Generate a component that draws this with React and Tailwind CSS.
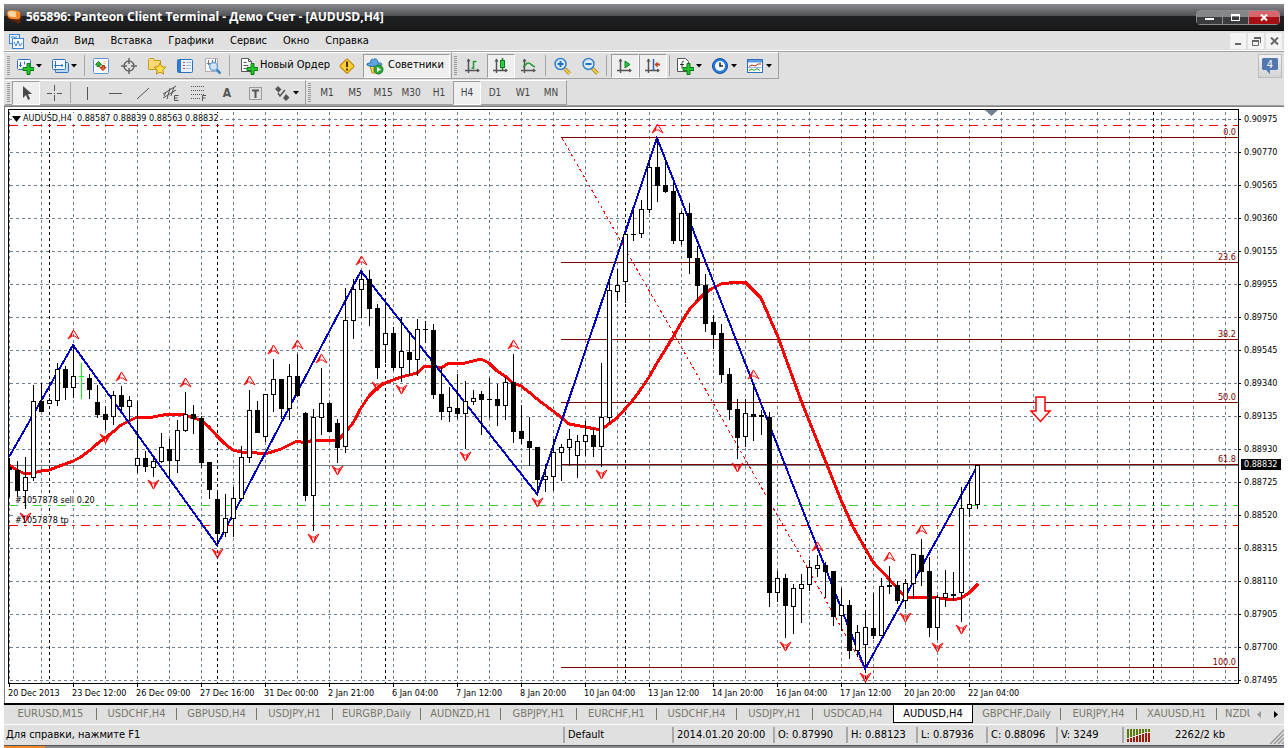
import { useState } from "react";

// y values per bar: [high, low, body top, body bottom, type] - w: bullish, b: bearish, g: doji
const BARS = [
  [458, 497, 467, 470, "b"], [461, 497, 470, 491, "b"], [457, 509, 477, 491, "w"], [385, 481, 401, 478, "w"],
  [383, 412, 401, 412, "b"], [398, 404, 400, 404, "w"], [363, 406, 369, 401, "w"], [366, 400, 369, 388, "b"],
  [345, 398, 376, 388, "w"], [363, 399, 376, 377, "g"], [374, 399, 378, 390, "b"], [385, 418, 402, 415, "b"],
  [406, 430, 414, 420, "b"], [391, 425, 395, 417, "w"], [386, 411, 395, 407, "b"], [396, 421, 400, 407, "w"],
  [401, 473, 458, 466, "w"], [451, 472, 458, 467, "b"], [457, 477, 461, 468, "w"], [433, 463, 447, 462, "w"],
  [439, 477, 449, 461, "b"], [420, 473, 430, 461, "w"], [392, 432, 414, 431, "w"], [405, 434, 414, 419, "b"],
  [416, 468, 418, 463, "b"], [462, 499, 462, 490, "b"], [493, 545, 499, 534, "b"], [494, 537, 518, 533, "w"],
  [487, 537, 498, 519, "w"], [446, 499, 457, 499, "w"], [390, 463, 410, 458, "w"], [401, 433, 410, 433, "b"],
  [394, 442, 394, 437, "w"], [359, 412, 379, 395, "w"], [379, 419, 379, 409, "b"], [364, 420, 376, 409, "w"],
  [354, 397, 376, 396, "b"], [412, 501, 413, 496, "b"], [409, 531, 417, 496, "w"], [368, 435, 403, 418, "w"],
  [402, 432, 403, 432, "b"], [419, 463, 423, 448, "b"], [288, 453, 320, 447, "w"], [279, 339, 289, 321, "w"],
  [271, 318, 279, 290, "w"], [270, 326, 279, 309, "b"], [304, 379, 308, 368, "b"], [305, 363, 333, 345, "w"],
  [327, 371, 333, 368, "b"], [317, 382, 351, 368, "w"], [331, 376, 352, 360, "b"], [319, 376, 329, 360, "w"],
  [321, 343, 329, 330, "b"], [324, 399, 330, 395, "b"], [367, 420, 394, 412, "b"], [387, 422, 407, 412, "w"],
  [374, 419, 408, 414, "b"], [381, 449, 401, 414, "w"], [390, 405, 398, 402, "w"], [391, 435, 394, 400, "b"],
  [378, 418, 399, 400, "b"], [384, 426, 399, 406, "b"], [377, 420, 382, 406, "w"], [354, 443, 382, 432, "b"],
  [405, 444, 431, 439, "b"], [417, 466, 441, 448, "b"], [447, 493, 447, 480, "b"], [464, 492, 476, 480, "w"],
  [439, 491, 452, 477, "w"], [444, 481, 447, 453, "w"], [429, 466, 439, 448, "w"], [435, 478, 441, 456, "w"],
  [421, 456, 435, 442, "w"], [428, 457, 435, 447, "b"], [363, 467, 417, 447, "w"], [280, 423, 290, 418, "w"],
  [269, 301, 285, 292, "w"], [233, 303, 234, 282, "w"], [210, 241, 234, 235, "b"], [200, 238, 209, 234, "w"],
  [158, 213, 167, 210, "w"], [138, 202, 167, 186, "b"], [159, 193, 185, 192, "b"], [183, 244, 191, 241, "b"],
  [211, 245, 213, 241, "w"], [203, 274, 213, 258, "b"], [246, 301, 258, 286, "b"], [274, 332, 285, 324, "b"],
  [315, 349, 322, 335, "b"], [324, 383, 333, 375, "b"], [368, 420, 374, 410, "b"], [399, 459, 409, 438, "b"],
  [399, 447, 413, 437, "w"], [384, 441, 414, 417, "b"], [410, 435, 415, 417, "b"], [412, 607, 417, 593, "b"],
  [571, 602, 578, 593, "w"], [574, 638, 578, 606, "b"], [584, 634, 588, 607, "w"], [574, 623, 584, 589, "w"],
  [560, 591, 567, 585, "w"], [555, 577, 565, 569, "w"], [562, 598, 565, 572, "b"], [571, 626, 571, 617, "b"],
  [588, 631, 605, 616, "w"], [600, 659, 605, 651, "b"], [625, 657, 632, 651, "w"], [613, 667, 627, 645, "w"],
  [593, 639, 628, 636, "b"], [578, 636, 586, 636, "w"], [566, 594, 585, 587, "b"], [581, 604, 585, 601, "b"],
  [579, 609, 583, 601, "w"], [554, 599, 554, 584, "w"], [539, 586, 555, 572, "b"], [557, 637, 571, 628, "b"],
  [595, 640, 597, 628, "w"], [570, 607, 593, 598, "w"], [572, 601, 594, 596, "b"], [487, 622, 508, 593, "w"],
  [478, 517, 504, 509, "w"], [465, 509, 465, 505, "w"],
];

const MA =
  "9,465 17,470 25,474 33,473 41,471 49,470 57,467 65,464 73,461 81,457 89,451 97,444 105,438 113,432 121,425 129,421 137,417 153,417 169,414 177,414 185,415 193,418 201,420 209,427 217,436 225,444 233,450 241,452 249,452 265,454 281,449 297,441 305,443 313,440 321,440 337,441 345,433 353,423 361,408 369,396 377,388 385,383 393,380 401,377 417,373 425,366 433,366 441,368 449,363 465,363 481,359 489,363 497,371 505,376 513,383 521,386 529,392 537,399 545,405 553,411 561,417 569,424 585,427 601,430 609,424 617,418 625,409 633,400 641,389 649,377 657,363 665,350 673,337 681,323 689,310 697,301 705,293 713,288 721,284 729,283 745,282 761,298 778,337 790,370 802,403 816,438 827,465 841,500 853,527 873,562 889,579 897,588 905,597 921,597 937,598 953,600 961,598 969,593 978,584";
const ZIGZAG = "9,457 73,345 217,545 361,271 537,494 657,138 865,669 978,465";

const UP = [[73, 334], [121, 376], [185, 382], [249, 380], [273, 349], [297, 344], [321, 358], [361, 260], [513, 344], [657, 128], [753, 374], [817, 546], [889, 556], [921, 529]];
const DOWN = [[25, 517], [105, 438], [153, 484], [217, 553], [313, 538], [337, 470], [377, 386], [401, 389], [465, 456], [537, 502], [601, 474], [737, 467], [785, 646], [865, 677], [905, 617], [937, 647], [961, 629]];

const FIBO = [[137, "0.0"], [262, "23.6"], [339, "38.2"], [402, "50.0"], [464, "61.8"], [667, "100.0"]];
const DAYS = [49, 217, 385, 625, 865, 1153];
const PRICES = ["0.90975", "0.90770", "0.90565", "0.90360", "0.90155", "0.89955", "0.89750", "0.89545", "0.89340", "0.89135", "0.88930", "0.88725", "0.88520", "0.88315", "0.88110", "0.87905", "0.87700", "0.87495"];
const TIMES = ["20 Dec 2013", "23 Dec 12:00", "26 Dec 09:00", "27 Dec 16:00", "31 Dec 00:00", "2 Jan 21:00", "6 Jan 04:00", "7 Jan 12:00", "8 Jan 20:00", "10 Jan 04:00", "13 Jan 12:00", "14 Jan 20:00", "16 Jan 04:00", "17 Jan 12:00", "20 Jan 20:00", "22 Jan 04:00"];

const TABS = [
  ["EURUSD,M15", "w-[92px]"], ["USDCHF,H4", "w-20"], ["GBPUSD,H4", "w-20"], ["USDJPY,H1", "w-[76px]"],
  ["EURGBP,Daily", "w-[88px]"], ["AUDNZD,H1", "w-20"], ["GBPJPY,H1", "w-[76px]"], ["EURCHF,H1", "w-20"],
  ["USDCHF,H4", "w-20"], ["USDJPY,H1", "w-[76px]"], ["USDCAD,H4", "w-20"], ["AUDUSD,H4", "w-20"],
  ["GBPCHF,Daily", "w-[88px]"], ["EURJPY,H4", "w-[76px]"], ["XAUUSD,H1", "w-20"],
];

const PERIODS = ["M1", "M5", "M15", "M30", "H1", "H4", "D1", "W1", "MN"];
const MENU = ["Файл", "Вид", "Вставка", "Графики", "Сервис", "Окно", "Справка"];

function Icon({ children, size = 18 }) {
  return (
    <svg width={size} height={size} viewBox="0 0 18 18" fill="none" className="shrink-0" aria-hidden="true">
      {children}
    </svg>
  );
}

const Plus = () => <path d="M11 6.5h3v4h4v3h-4v4h-3v-4H7v-3h4z" fill="#22c52e" stroke="#0a7a12" />;

const Axes = () => (
  <>
    <path d="M4.5 2v14M1 13.5h14" stroke="#555" strokeWidth="1.5" />
    <path d="M2.5 4.5l2-3 2 3zM13 11.5l3 2-3 2z" fill="#555" />
  </>
);

const NewChart = () => (
  <Icon>
    <rect x="1.5" y="2.5" width="13" height="10" rx="1" fill="#f4f9ff" stroke="#3572b5" />
    <path d="M4.5 5v5M3 8.5h3M8.5 4.5v3" stroke="#3572b5" />
    <Plus />
  </Icon>
);
const Profiles = () => (
  <Icon>
    <rect x="4.5" y="5.5" width="13" height="10" rx="1" fill="#bcd8f5" stroke="#3572b5" />
    <rect x="1.5" y="2.5" width="13" height="10" rx="1" fill="#eef6ff" stroke="#3572b5" />
    <path d="M4.5 4v7M3 8.5h9M11 7v3M4.5 15.5h9" stroke="#3572b5" />
  </Icon>
);
const MarketWatch = () => (
  <Icon>
    <rect x="1.5" y="1.5" width="15" height="15" rx="1" fill="#fdfdfd" stroke="#5b93d0" />
    <path d="M5 9.500V7.500H3.500L6.500 4.500l3 3H8v2z" fill="#3cb43c" stroke="#1c7d1c" />
    <path d="M10 8.500h2.500v2H14l-3 3-3-3h2z" fill="#f0622d" stroke="#a92d0b" />
    <path d="M11 4.500h4M11 6.500h3" stroke="#f2d0a8" />
  </Icon>
);
const Target = () => (
  <Icon>
    <circle cx="9" cy="9" r="5" stroke="#666" strokeWidth="1.5" />
    <path d="M9 1v6M9 11v6M1 9h6M11 9h6" stroke="#666" strokeWidth="1.5" />
  </Icon>
);
const Favorites = () => (
  <Icon>
    <path d="M.5 12.500V2.500l1-1h4l1 2h6v9z" fill="#f7d977" stroke="#c59a20" />
    <path d="M12 6l1.800 3.600 4 .6-3 2.800.8 4L12 15.200 8.400 17l.8-4-3-2.800 4-.6z" fill="#ffe04b" stroke="#c08a10" />
  </Icon>
);
const Navigator = () => (
  <Icon>
    <rect x="1.500" y="2.500" width="15" height="13" rx="1" fill="#eaf4ff" stroke="#2c6fbd" />
    <path d="M2 3h3v12H2z" fill="#2c7bd6" />
    <path d="M7 5.500h2M7 8.500h2M7 11.500h2" stroke="#d04020" />
    <path d="M10 5.500h5M10 8.500h5M10 11.500h5" stroke="#9fc0e4" />
  </Icon>
);
const Tester = () => (
  <Icon>
    <rect x="1.500" y="1.500" width="12" height="13" fill="#fafafa" stroke="#b0b0b0" />
    <path d="M4.500 3v5M3 6.500h3M8.500 3v2M11.500 2v5" stroke="#777" />
    <path d="M12.500 12.500l4 4" stroke="#4488cc" strokeWidth="2.500" />
    <circle cx="9.500" cy="9.500" r="4" fill="#cfe6fa" stroke="#6fa4d4" strokeWidth="1.500" />
  </Icon>
);
const NewOrder = () => (
  <Icon>
    <path d="M1.500 1.500h7l3 3v10h-10z" fill="#fff" stroke="#555" />
    <path d="M8.500 1.500v3h3M3.500 5.500h3M3.500 8.500h5M3.500 11.500h3" stroke="#555" />
    <Plus />
  </Icon>
);
const Warning = () => (
  <Icon>
    <rect x="3.800" y="3.800" width="10.500" height="10.500" rx="1" transform="rotate(45 9 9)" fill="#ffcf33" stroke="#b98500" />
    <path d="M9 4.500v5.500M9 11.500v2" stroke="#4a3300" strokeWidth="2" />
  </Icon>
);
const Experts = () => (
  <Icon>
    <path d="M4 9h9l-2 7H6z" fill="#f7cf5a" stroke="#b88a1a" />
    <path d="M1 8c-.5-2 2-2 3.500-2C4.500 2.500 6 1.500 7.500 2.500 9 1 12 2 12 6c2 0 4 0 4 1.500C14 10 3 10 1 8z" fill="#5aa7e0" stroke="#2a6ca8" />
    <circle cx="12.500" cy="12.500" r="4.500" fill="#2fa83a" stroke="#187a22" />
    <path d="M11 10l4 2.500-4 2.500z" fill="#fff" />
  </Icon>
);
const BarChart = () => (
  <Icon><Axes /><path d="M9.500 4v8M7.500 11h2M9.500 4.500h3" stroke="#1c9a2a" strokeWidth="1.500" /></Icon>
);
const CandleChart = () => (
  <Icon>
    <Axes />
    <path d="M10.500 1v12" stroke="#0f7a1a" strokeWidth="1.500" />
    <rect x="8.500" y="3.500" width="4" height="7" fill="#2fd23e" stroke="#0f7a1a" />
  </Icon>
);
const LineChart = () => (
  <Icon><Axes /><path d="M3 10c2-1 3-4 5.500-4 2 0 3.500 3 6.500 4" stroke="#1c9a2a" strokeWidth="1.500" /></Icon>
);
const Zoom = ({ plus }) => (
  <Icon>
    <path d="M11.500 11.500l5 5" stroke="#a57b12" strokeWidth="3.500" />
    <path d="M11.500 11.500l5 5" stroke="#f5cf4c" strokeWidth="2" />
    <circle cx="7.500" cy="7" r="5.500" fill="#d6ecfb" stroke="#3b7fc4" strokeWidth="1.500" />
    <path d={plus ? "M4.500 7h6M7.500 4v6" : "M4.500 7h6"} stroke="#2a6fb5" strokeWidth="2" />
  </Icon>
);
const AutoScroll = () => (
  <Icon><Axes /><path d="M9 4l5 3.500L9 11z" fill="#2cc23a" stroke="#118a1d" /></Icon>
);
const ChartShift = () => (
  <Icon>
    <Axes />
    <path d="M9.500 2v11" stroke="#2b64a8" strokeWidth="1.500" />
    <path d="M10.500 7.500l3-3v2H16v2h-2.500v2z" fill="#c4431c" />
  </Icon>
);
const Indicators = () => (
  <Icon>
    <path d="M1.500 1.500h8l3 3v10h-11z" fill="#fff" stroke="#555" />
    <path d="M8 4.500c-2-1-2 1-2 3v4M4 7.500h4" stroke="#333" />
    <Plus />
  </Icon>
);
const Clock = () => (
  <Icon>
    <circle cx="9" cy="9" r="7.500" fill="#2a7be0" stroke="#114f9f" />
    <circle cx="9" cy="9" r="5" fill="#f4f9ff" />
    <path d="M9 5.500V9h3" stroke="#222" strokeWidth="1.500" />
  </Icon>
);
const Template = () => (
  <Icon>
    <rect x="1.500" y="2.500" width="15" height="13" fill="#fff" stroke="#2c6fbd" />
    <path d="M2 3h14v2.500H2z" fill="#5a9be0" />
    <path d="M3 9.500l3-1.500 3 1 3-2h3" stroke="#a83216" />
    <path d="M2 10.500h14" stroke="#9fc0e4" />
    <path d="M3 13.500l3-1.500 2 1.500 3-2 3 2" stroke="#1c9a2a" />
  </Icon>
);

function Caret() {
  return (
    <svg width="6" height="4" viewBox="0 0 6 4" className="shrink-0" aria-hidden="true">
      <path d="M0 0h6L3 3.500z" fill="#000" />
    </svg>
  );
}

const PRESSED = "border border-t-[#9c9c9c] border-l-[#9c9c9c] border-b-white border-r-white bg-[#efefef]";

function Tool({ label, pressed, children }) {
  return (
    <button aria-label={label} title={label} className={`flex h-6 w-7 shrink-0 items-center justify-center text-[#555] ${pressed ? PRESSED : ""}`}>
      {children}
    </button>
  );
}

function DropTool({ label, children }) {
  return (
    <button aria-label={label} title={label} className="flex h-6 w-[35px] shrink-0 items-center gap-0.5 pl-1">
      {children}
      <Caret />
    </button>
  );
}

const Sep = () => <span className="mx-0.5 h-[21px] w-px shrink-0 bg-[#a5a5a5]" />;
const Grip = () => (
  <span className="mx-0.5 h-5 w-[3px] shrink-0 bg-[repeating-linear-gradient(#999_0px,#999_1px,#e0e0e0_1px,#e0e0e0_2px)]" />
);

function Bar({ children }) {
  return <div className="flex h-full shrink-0 items-center border-t border-r border-b border-t-white border-r-[#a0a0a0] border-b-[#a0a0a0] pr-px">{children}</div>;
}

function TitleBar() {
  return (
    <header className="flex h-[27px] items-center border-b border-black bg-[linear-gradient(#8a8b8e_0px,#505154_12px,#202123_12px,#19191a_26px)] pl-0.5 pr-1">
      <svg width="17" height="17" viewBox="0 0 17 17" className="mr-[3px]" aria-hidden="true">
        <path d="M1 5c1-4 7-4 12-2 3 1 3 6 2 9-1 3-4 3-6 1-3-2-9-1-8-8z" fill="#5b2408" />
        <path d="M1 4c1-4 7-3 11-2 3 1 3 4 2 7-1 2-3 1-6 1-4 0-7-1-7-6z" fill="#f58a2a" />
        <path d="M2 4c1-3 5-2 8-1v5C6 8 2 8 2 4z" fill="#ffd6a0" />
      </svg>
      <h1 className="flex-1 truncate font-['Open_Sans','Noto_Sans',sans-serif] text-[12px] font-bold text-white">
        565896: Panteon Client Terminal - Демо Счет - [AUDUSD,H4]
      </h1>
      <div className="flex h-[15px] rounded-sm border border-[#8e8e90] bg-black">
        <button aria-label="Свернуть" className="flex w-[26px] items-center justify-center border-r border-[#8e8e90] bg-[linear-gradient(#85868a_50%,#3a3b3d_50%)]">
          <span className="mt-1 h-0.5 w-[9px] bg-white" />
        </button>
        <button aria-label="Развернуть" className="flex w-[26px] items-center justify-center border-r border-[#8e8e90] bg-[linear-gradient(#85868a_50%,#3a3b3d_50%)]">
          <span className="h-[7px] w-[9px] border border-t-2 border-white" />
        </button>
        <button aria-label="Закрыть" className="flex w-[30px] items-center justify-center bg-[linear-gradient(#d9666a_50%,#a80f14_50%)]">
          <svg width="8" height="7" viewBox="0 0 8 7"><path d="M1 .5l6 6M7 .5l-6 6" stroke="#fff" strokeWidth="2" /></svg>
        </button>
      </div>
    </header>
  );
}

function MenuBar() {
  const btn = "flex h-4 w-4 items-center justify-center bg-[#f4f4f4]";
  return (
    <nav className="flex h-5 items-center border-b border-white pl-[5px] pr-0.5 pt-px text-[11px] leading-4">
      <svg width="15" height="15" viewBox="0 0 15 15" className="mr-[7px]" aria-hidden="true">
        <rect x=".5" y=".5" width="10" height="9" fill="#e9f3ff" stroke="#3f83d6" />
        <rect x="3.500" y="4.500" width="11" height="10" fill="#f6faff" stroke="#3f83d6" />
        <path d="M5 8l2 4 2-5 2 5 2-3M2 3.500l2-1 2 1 2-1" stroke="#3f83d6" fill="none" />
      </svg>
      <div className="flex flex-1 gap-4">
        {MENU.map((m) => <button key={m}>{m}</button>)}
      </div>
      <div className="flex gap-0.5">
        <button aria-label="Свернуть окно" className={btn}><span className="mt-1.5 h-0.5 w-1.5 bg-[#666]" /></button>
        <button aria-label="Восстановить окно" className={btn}>
          <svg width="9" height="9" viewBox="0 0 9 9"><path d="M2.500 1h6v5M.5 4h6v4.500h-6z" fill="none" stroke="#666" /><path d="M2 1h7M0 4h7" stroke="#666" strokeWidth="2" /></svg>
        </button>
        <button aria-label="Закрыть окно" className={btn}>
          <svg width="9" height="8" viewBox="0 0 9 8"><path d="M1 .5l7 7M8 .5l-7 7" stroke="#666" strokeWidth="2" /></svg>
        </button>
      </div>
    </nav>
  );
}

function MainTools() {
  return (
    <div className="flex h-[29px] items-start justify-between border-t border-[#a0a0a0] pl-px">
      <div className="flex h-[27px]">
        <Bar>
          <Grip />
          <DropTool label="Новый график"><NewChart /></DropTool>
          <DropTool label="Профили"><Profiles /></DropTool>
          <Sep />
          <Tool label="Обзор рынка"><MarketWatch /></Tool>
          <Tool label="Окно данных"><Target /></Tool>
          <Tool label="Навигатор"><Favorites /></Tool>
          <Tool label="Терминал"><Navigator /></Tool>
          <Tool label="Тестер стратегий"><Tester /></Tool>
          <Sep />
          <button className="flex h-6 w-[101px] shrink-0 items-center gap-0.5 whitespace-nowrap pl-2 text-[11px]"><NewOrder />Новый Ордер</button>
          <Tool label="MetaEditor"><Warning /></Tool>
          <button className={`ml-0.5 flex h-6 w-[87px] shrink-0 items-center gap-1 pl-0.5 text-[11px] ${PRESSED}`}><Experts />Советники</button>
        </Bar>
        <Bar>
          <Grip />
          <Tool label="Бары"><BarChart /></Tool>
          <Tool label="Японские свечи" pressed><CandleChart /></Tool>
          <Tool label="Линия"><LineChart /></Tool>
          <Sep />
          <Tool label="Увеличить"><Zoom plus /></Tool>
          <Tool label="Уменьшить"><Zoom /></Tool>
          <Sep />
          <div className="ml-0.5 flex">
            <Tool label="Автопрокрутка" pressed><AutoScroll /></Tool>
            <Tool label="Сдвиг графика" pressed><ChartShift /></Tool>
          </div>
          <Sep />
          <DropTool label="Индикаторы"><Indicators /></DropTool>
          <DropTool label="Периоды"><Clock /></DropTool>
          <DropTool label="Шаблоны"><Template /></DropTool>
        </Bar>
      </div>
      <button aria-label="Сообщения: 4" className="mr-0.5 mt-0.5 flex h-6 w-6 items-center justify-center border border-[#bbb] bg-[linear-gradient(#f2f2f2,#d4d4d4)]">
        <svg width="16" height="17" viewBox="0 0 16 17">
          <path d="M1 0h14l1 1v10l-1 1H8v4l-4-4H1l-1-1V1z" fill="#5577b0" />
          <text x="8" y="10" textAnchor="middle" fontSize="11" fill="#fff">4</text>
        </svg>
      </button>
    </div>
  );
}

function DrawTools() {
  const [period, setPeriod] = useState("H4");
  return (
    <div className="flex h-[26px] border-b border-[#a0a0a0] pl-px">
      <Bar>
        <Grip />
        <Tool label="Курсор" pressed><Icon><path d="M6 2v12l3-3 2 5 2-1-2-5h4z" fill="#4a4a4a" /></Icon></Tool>
        <Tool label="Перекрестие"><Icon><path d="M9.500 1v6M9.500 11v6M2 9.500h5M12 9.500h5M9 9.500h1" stroke="#555" /></Icon></Tool>
        <Sep />
        <Tool label="Вертикальная линия"><Icon><path d="M9.500 3v13" stroke="#555" /></Icon></Tool>
        <Tool label="Горизонтальная линия"><Icon><path d="M3 9.500h13" stroke="#555" /></Icon></Tool>
        <Tool label="Трендовая линия"><Icon><path d="M3 15L15 4" stroke="#555" /></Icon></Tool>
        <Tool label="Равноудаленный канал">
          <Icon><path d="M1 10L14 2M1 14L14 6M5 15L8 4M9 12l3-9M2 12l2-4" stroke="#555" /><path d="M16.500 11.500h-4v5h4M12.500 14h3" stroke="#555" /></Icon>
        </Tool>
        <Tool label="Линии Фибоначчи">
          <Icon>
            <path d="M1 2.500h14M1 6.500h14M1 10.500h14M1 14.500h9" stroke="#555" strokeDasharray="1 1" />
            <path d="M12.500 17v-5.500h3.500M12.500 14h3" stroke="#555" />
          </Icon>
        </Tool>
        <Tool label="Текст"><span className="text-[12px] font-bold">A</span></Tool>
        <Tool label="Текстовая метка">
          <Icon><rect x="3.500" y="3.500" width="12" height="12" stroke="#555" strokeDasharray="1 1" /><path d="M6 6.500h7M9.500 6v8" stroke="#555" strokeWidth="2" /></Icon>
        </Tool>
        <DropTool label="Стрелки">
          <Icon><path d="M5 2l3.500 3.500-3 3L2 5z M13 10l3.500 3.500L13 17l-3-3z" fill="#555" /><path d="M5 9l2 3 5-6" stroke="#555" strokeWidth="1.500" /></Icon>
        </DropTool>
      </Bar>
      <Bar>
        <Grip />
        {PERIODS.map((p) => (
          <button
            key={p}
            onClick={() => setPeriod(p)}
            className={`h-6 w-7 shrink-0 text-center text-[10px] text-[#444] ${p === period ? PRESSED : ""}`}
          >
            {p}
          </button>
        ))}
      </Bar>
    </div>
  );
}

function Candle({ i, bar }) {
  const [high, low, top, bottom, type] = bar;
  const x = 9 + i * 8;
  const color = type === "g" ? "#0f0" : "#000";
  return (
    <g shapeRendering="crispEdges">
      <rect x={x} y={high} width="1" height={low - high} fill={color} />
      {type === "w" ? (
        <rect x={x - 1.5} y={top + 0.5} width="4" height={bottom - top - 1} fill="#fff" stroke="#000" />
      ) : (
        <rect x={x - 2} y={top} width="5" height={bottom - top} fill={color} />
      )}
    </g>
  );
}

function Fractal({ x, y, down }) {
  return (
    <g transform={`translate(${x + 0.5} ${y + 0.5})${down ? " scale(1 -1)" : ""}`}>
      <path d="M0-4.500L-5.500 4.500L-1 1.500H1L5.500 4.500Z" fill="none" stroke="red" />
      <path d="M0-5L-4.500 3.500L-1.500 1Z" fill="red" />
      <path d="M0-5L3.500 2L1 1Z" fill={down ? "red" : "none"} />
    </g>
  );
}

function Plot() {
  return (
    <svg width="100%" height="573" className="block" role="img" aria-label="AUDUSD,H4">
      <defs>
        <pattern id="cols" width="32" height="6" patternUnits="userSpaceOnUse"><rect width="1" height="3" y="2" fill="#708090" /></pattern>
        <pattern id="rows" x="1" y="9" width="6" height="33" patternUnits="userSpaceOnUse"><rect width="3" height="1" fill="#708090" /></pattern>
      </defs>
      <rect width="100%" height="100%" fill="#fff" />
      <rect width="100%" height="100%" fill="url(#cols)" shapeRendering="crispEdges" />
      <rect width="100%" height="100%" fill="url(#rows)" shapeRendering="crispEdges" />
      <g shapeRendering="crispEdges">
        {DAYS.map((x) => <path key={x} d={`M${x - 8.5} 2v571`} stroke="#000" strokeDasharray="3 3" />)}
        <path d="M3 3h206v10H3zM6 385h81v10H6zM6 405h54v10H6z" fill="#fff" />
        <line x1="0" x2="100%" y1="355.5" y2="355.5" stroke="#708090" />
        <line x1="0" x2="100%" y1="15.5" y2="15.5" stroke="red" strokeDasharray="9 6 3 6" />
        <line x1="0" x2="100%" y1="395.5" y2="395.5" stroke="#32cd32" strokeDasharray="9 6 3 6" />
        <line x1="0" x2="100%" y1="415.5" y2="415.5" stroke="red" strokeDasharray="9 6 3 6" />
        {FIBO.map(([y]) => <line key={y} x1="552" x2="100%" y1={y - 109.5} y2={y - 109.5} stroke="maroon" />)}
      </g>
      <g transform="translate(-9 -110)">
        <path d="M562 138L865 669" stroke="red" strokeDasharray="3 3" shapeRendering="crispEdges" />
        <polyline points={MA} fill="none" stroke="red" strokeWidth="3" strokeLinejoin="round" shapeRendering="crispEdges" />
        <polyline points={ZIGZAG} fill="none" stroke="#0000c8" strokeWidth="2" shapeRendering="crispEdges" />
        {UP.map(([x, y]) => <Fractal key={x} x={x} y={y} />)}
        {DOWN.map(([x, y]) => <Fractal key={x} x={x} y={y} down />)}
        {BARS.map((bar, i) => <Candle key={i} i={i} bar={bar} />)}
        <path d="M1036 397h9v14h5l-9.500 10.500L1031 411h5z" fill="#fff" stroke="red" strokeWidth="1.500" />
        <path d="M985 110h13l-6.500 6z" fill="#708090" />
        <path d="M12 116h9l-4.500 6z" fill="#000" />
      </g>
      <g fontSize="9">
        <text x="14" y="11">AUDUSD,H4&nbsp; 0.88587 0.88839 0.88563 0.88832</text>
        <text x="6" y="393">#1057878 sell 0.20</text>
        <text x="6" y="413">#1057878 tp</text>
        {FIBO.map(([y, label]) => <text key={y} x="100%" dx="-2" y={y - 112} textAnchor="end" fill="maroon">{label}</text>)}
      </g>
    </svg>
  );
}

function Chart() {
  return (
    <main className="border-l border-t border-[#808080] bg-white pb-1 pl-[3px] pr-0.5 pt-0.5 text-[9px]">
      <div className="flex">
        <div className="min-w-0 flex-1 border border-black"><Plot /></div>
        <div className="relative -mb-0.5 w-[43px] shrink-0 pt-1">
          <div className="flex flex-col gap-[21px]">
            {PRICES.map((p) => (
              <div key={p} className="flex h-3 items-center gap-[3px] leading-3">
                <span className="h-px w-0.5 bg-black" />
                {p}
              </div>
            ))}
          </div>
          <span className="absolute left-0.5 top-[350px] h-[11px] w-10 bg-black pl-[3px] leading-[11px] text-white">0.88832</span>
        </div>
      </div>
      <div className="flex overflow-hidden">
        {TIMES.map((t) => (
          <div key={t} className="w-16 shrink-0 whitespace-nowrap leading-3">
            <span className="ml-px block h-[3px] w-px bg-black" />
            {t}
          </div>
        ))}
      </div>
    </main>
  );
}

function Tabs() {
  return (
    <div className="flex h-[21px] border-t-2 border-black pl-px text-[11px] leading-4 text-[#77776a]">
      <div className="flex min-w-0 flex-1 overflow-hidden">
        {TABS.map(([name, width], i) => (
          <button
            key={i}
            className={`flex h-[18px] shrink-0 items-center justify-center whitespace-nowrap ${width} ${
              name === "AUDUSD,H4" ? "border-x border-b border-black bg-white text-black" : ""
            }`}
          >
            <span className="flex-1">{name}</span>
            {name !== "AUDUSD,H4" && name !== "USDCAD,H4" && <span className="h-3 w-px bg-[#77776a]" />}
          </button>
        ))}
        <button className="h-[18px] pl-2">NZDUSD,H4</button>
      </div>
      <div className="flex w-[34px] items-center justify-around">
        <button aria-label="Назад"><svg width="4" height="7" viewBox="0 0 4 7"><path d="M4 0v7L0 3.500z" fill="#999" /></svg></button>
        <button aria-label="Вперед"><svg width="4" height="7" viewBox="0 0 4 7"><path d="M0 0v7l4-3.500z" fill="#000" /></svg></button>
      </div>
    </div>
  );
}

function StatusBar() {
  const cell = "h-4 shrink-0 border-l-2 border-[#a8a8a8] pl-[3px]";
  return (
    <footer className="flex h-[21px] items-center border-t border-white pl-0.5 text-[11px] leading-4">
      <span className="min-w-0 flex-1 truncate">Для справки, нажмите F1</span>
      <span className={`${cell} w-[109px]`}>Default</span>
      <span className={`${cell} w-[101px]`}>2014.01.20 20:00</span>
      <span className={`${cell} w-[73px]`}>O: 0.87990</span>
      <span className={`${cell} w-[70px]`}>H: 0.88123</span>
      <span className={`${cell} w-[70px]`}>L: 0.87936</span>
      <span className={`${cell} w-[70px]`}>C: 0.88096</span>
      <span className={`${cell} w-[66px]`}>V: 3249</span>
      <span className={`${cell} flex w-[148px] items-center gap-6`}>
        <svg width="24" height="13" viewBox="0 0 24 13" shapeRendering="crispEdges" aria-hidden="true">
          {[0, 1, 2, 3, 4, 5, 6, 7].map((n) => (
            <g key={n}>
              <rect x={n * 3} y="0" width="2" height={Math.max(3, 9 - n)} fill="#5b7a0c" />
              <rect x={n * 3} y={Math.max(4, 10 - n)} width="2" height={13 - Math.max(4, 10 - n)} fill="#9c1c0c" />
            </g>
          ))}
        </svg>
        2262/2 kb
      </span>
      <svg width="14" height="18" viewBox="0 0 14 18" aria-hidden="true">
        <path d="M0 18L14 4M4 18L14 8M8 18l6-6M12 18l2-2" stroke="#999" strokeWidth="1.500" />
      </svg>
    </footer>
  );
}

export default function App() {
  return (
    <div className="min-h-screen overflow-hidden bg-white px-1 pt-1 font-['DejaVu_Sans_Condensed','DejaVu_Sans',sans-serif] text-black">
      <div className="bg-[#e0e0e0]">
        <TitleBar />
        <MenuBar />
        <MainTools />
        <DrawTools />
        <Chart />
        <Tabs />
        <StatusBar />
        <div className="h-1 border-t border-[#555] bg-[#8a8b8e]">
          <div className="h-[3px] w-[41px] bg-[#f58a2a]" />
        </div>
      </div>
    </div>
  );
}
